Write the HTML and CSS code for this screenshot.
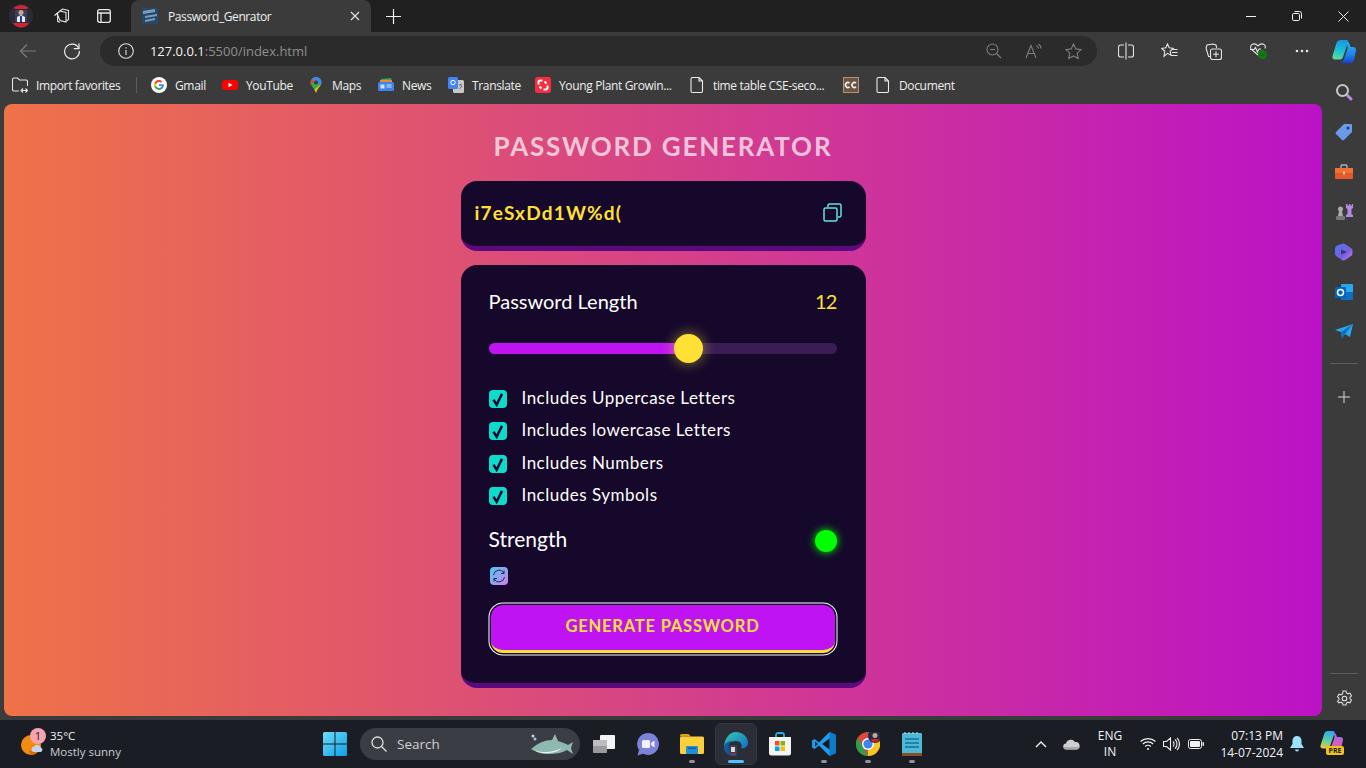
FILE: index.html
```html
<!DOCTYPE html>
<html lang="en">
<head>
  <meta charset="UTF-8" />
  <meta name="viewport" content="width=device-width, initial-scale=1.0"/>
  <title>Password_Genrator</title>
  <link rel="stylesheet" href="styles.css">
</head>
<body>

  <!-- tab strip -->
  <div class="tabstrip">
    <div class="strip-btn avatar-btn">
      <svg width="24" height="24" viewBox="0 0 24 24"><circle cx="12" cy="12" r="12" fill="#2a2d38"/><path d="M5 3.5a11 11 0 0 1 14 0l-1 1.5H6zM4 19h16l-2 2.5a11 11 0 0 1-12 0z" fill="#d8222f"/><rect x="6" y="6" width="12" height="12" fill="#39405e"/><circle cx="12" cy="8.5" r="2.5" fill="#c9a58e"/><path d="M8 18v-5l4-2 4 2v5z" fill="#e9ecf4"/><path d="M11 12h2v6h-2z" fill="#1f3fa0"/></svg>
    </div>
    <div class="strip-btn first-btn">
      <svg width="18" height="18" viewBox="0 0 18 18" fill="none" stroke="#e8e8e8" stroke-width="1.1"><path d="M6.5 4.5 9.5 2l6 1.5v9l-2 1.5"/><path d="M4 6.5 7 4l6 1.5V15l-6-1.5z" fill="#202020"/><path d="M1.5 8.5 4.500 6.200l.2 8.300 2.300.7"/></svg>
    </div>
    <div class="strip-btn">
      <svg width="16" height="16" viewBox="0 0 16 16" fill="none" stroke="#e8e8e8" stroke-width="1.3"><rect x="1.7" y="1.7" width="12.6" height="12.6" rx="2"/><path d="M1.7 5h12.6M5 5v9"/></svg>
    </div>
    <div class="tab">
      <svg class="tab-icon" width="16" height="16" viewBox="0 0 16 16"><rect width="16" height="16" fill="#24496f"/><path d="M1 3l12-2v3L1 6zM3 8l12-2v2L3 10zM3 12l10-2v2L3 14z" fill="#7d9cb8"/></svg>
      <span class="tab-title">Password_Genrator</span>
      <svg width="10" height="10" viewBox="0 0 10 10" stroke="#e8e8e8" stroke-width="1.1"><path d="M1 1l8 8M9 1l-8 8"/></svg>
    </div>
    <div class="strip-btn new-tab">
      <svg width="15" height="15" viewBox="0 0 15 15" stroke="#f2f2f2" stroke-width="1.2"><path d="M7.5 0v15M0 7.5h15"/></svg>
    </div>
    <div class="window-btns">
      <div class="win-btn"><svg width="10" height="10" viewBox="0 0 10 10" stroke="#f2f2f2"><path d="M0 5.5h10"/></svg></div>
      <div class="win-btn"><svg width="10" height="10" viewBox="0 0 10 10" fill="none" stroke="#f2f2f2"><rect x=".5" y="2.5" width="7" height="7" rx="1.2"/><path d="M2.5 .5h5a2 2 0 0 1 2 2v5"/></svg></div>
      <div class="win-btn"><svg width="11" height="11" viewBox="0 0 11 11" stroke="#f2f2f2"><path d="M.5.5l10 10M10.5.5l-10 10"/></svg></div>
    </div>
  </div>

  <!-- address bar -->
  <div class="toolbar">
    <div class="tool-btn dim">
      <svg width="18" height="16" viewBox="0 0 18 16" fill="none" stroke="#7b7b7b" stroke-width="1.2"><path d="M17 8H1.5M8 1.5 1.5 8 8 14.5"/></svg>
    </div>
    <div class="tool-btn">
      <svg width="18" height="18" viewBox="0 0 18 18" fill="none" stroke="#ececec" stroke-width="1.2"><path d="M15.8 6.500A7.400 7.400 0 1 0 16.400 9"/><path d="M16 1.5v5.200h-5.200"/></svg>
    </div>
    <div class="address">
      <svg class="info-icon" width="16" height="16" viewBox="0 0 16 16" fill="none" stroke="#e0e0e0" stroke-width="1.1"><circle cx="8" cy="8" r="7.3"/><path d="M8 7v5M8 4.200v1.300"/></svg>
      <span class="url"><b>127.0.0.1</b>:5500/index.html</span>
      <div class="address-icons">
        <span class="addr-icon"><svg width="16" height="16" viewBox="0 0 16 16" fill="none" stroke="#7f7f7f" stroke-width="1.1"><circle cx="6.5" cy="6.5" r="5.5"/><path d="M4 6.5h5M10.5 10.500 15 15"/></svg></span>
        <span class="addr-icon"><svg width="18" height="16" viewBox="0 0 18 16" fill="none" stroke="#7f7f7f" stroke-width="1.1"><path d="M1 15 6 2.500 11 15M2.800 10.500h6.400M11.500 2.500a4 4 0 0 1 2 3M13.500 1a6 6 0 0 1 2.500 4.500"/></svg></span>
        <span class="addr-icon"><svg width="17" height="17" viewBox="0 0 17 17" fill="none" stroke="#7f7f7f" stroke-width="1.1"><path d="m8.500 1 2.300 4.900 5.300.7-3.900 3.600 1 5.300-4.700-2.600-4.700 2.600 1-5.300L.9 6.600l5.300-.7z"/></svg></span>
      </div>
    </div>
    <div class="tool-right">
      <div class="tool-icon"><svg width="16" height="18" viewBox="0 0 16 18" fill="none" stroke="#e6e6e6" stroke-width="1.1"><path d="M8 .5v17M6 3H2.500a2 2 0 0 0-2 2v8a2 2 0 0 0 2 2H6M10 3h3.500a2 2 0 0 1 2 2v8a2 2 0 0 1-2 2H10"/></svg></div>
      <div class="tool-icon"><svg width="17" height="16" viewBox="0 0 17 16" fill="none" stroke="#e6e6e6" stroke-width="1.1"><path d="M6.500 1 8.200 4.800l4 .5-3 2.800.8 4.200-3.500-2-3.500 3 .8-5-3-2.900 4-.6zM11.500 6.500H16.500M11 9.500h5.500M10.500 12.500h6"/></svg></div>
      <div class="tool-icon"><svg width="17" height="17" viewBox="0 0 17 17" fill="none" stroke="#e6e6e6" stroke-width="1.1"><path d="M5 13.500H3.500L1 5l1-3 6-1 3 1 .7 3"/><rect x="5.5" y="6" width="11" height="10.5" rx="2"/><path d="M11 8.300v6M8 11.300h6"/></svg></div>
      <div class="tool-icon"><svg width="18" height="18" viewBox="0 0 18 18"><path d="M9 13 2 7a3.500 3.500 0 0 1 0-3.500C3.500 1.500 6.500 1 9 4c2.500-3 5.500-2.500 7-.5.500 1 .5 2 0 3" fill="none" stroke="#e6e6e6" stroke-width="1.1"/><path d="M1 7.500h4l1.500-2 2 4.500 1.500-3h2" fill="none" stroke="#e6e6e6" stroke-width="1.1"/><circle cx="13.5" cy="12.5" r="4.5" fill="#107c10"/><path d="m11.500 12.500 1.500 1.500 2.500-2.500" fill="none" stroke="#0b3d0b" stroke-width="1"/></svg></div>
      <div class="tool-icon"><svg width="14" height="4" viewBox="0 0 14 4" fill="#e6e6e6"><circle cx="2" cy="2" r="1.3"/><circle cx="7" cy="2" r="1.3"/><circle cx="12" cy="2" r="1.3"/></svg></div>
      <div class="tool-icon copilot"><svg width="24" height="23" viewBox="0 0 24 23"><defs><linearGradient id="cpA" x1="0.5" y1="0" x2="0.3" y2="1"><stop offset="0" stop-color="#1398e8"/><stop offset=".55" stop-color="#1cc4d0"/><stop offset="1" stop-color="#5fdc98"/></linearGradient><linearGradient id="cpB" x1="0.5" y1="0" x2="0.5" y2="1"><stop offset="0" stop-color="#2bb4f4"/><stop offset=".6" stop-color="#1c86ea"/><stop offset="1" stop-color="#1a3fd0"/></linearGradient></defs><path d="M9 0h5.500c1.500 0 2 1 1.500 2.500L11 17c-.5 1.500-1.500 2.500-3 2.500H3c-2 0-3-1.500-2.500-3.500l4-13C5 1 7 0 9 0z" fill="url(#cpA)"/><path d="M15 2c1-.2 2 .3 2.300 1.500L18.500 7h2.500c2 0 3 1 3 3l-1.800 9.500c-.4 2-1.700 3.500-3.700 3.500H7c2.500 0 4-1.200 4.800-3.500l3.500-10c.5-1.500.5-2.500 0-4z" fill="url(#cpB)"/></svg></div>
    </div>
  </div>

  <div class="below">
    <div class="content">
      <!-- favourites bar -->
      <div class="favbar">
        <div class="fav fav-import">
          <svg width="16" height="16" viewBox="0 0 16 16" fill="none" stroke="#e6e6e6" stroke-width="1.1"><path d="M7 14H2a1.500 1.500 0 0 1-1.500-1.500v-10A1.500 1.500 0 0 1 2 1h3.500l2 2H14a1.500 1.500 0 0 1 1.500 1.500V9M9 13.500h6.500M11 11.500l-2 2 2 2M13.500 11.500l2 2-2 2"/></svg>
          <span>Import favorites</span>
        </div>
        <div class="fav-sep"></div>
        <div class="fav fav-gmail">
          <svg width="16" height="16" viewBox="0 0 16 16"><circle cx="8" cy="8" r="8" fill="#fff"/><path d="M12.800 8.200c0-.4 0-.7-.1-1H8v1.800h2.700a2.300 2.300 0 0 1-1 1.500v1.300h1.600c1-.9 1.500-2.200 1.500-3.600z" fill="#4285f4"/><path d="M8 13c1.300 0 2.400-.4 3.300-1.200l-1.600-1.300c-.4.300-1 .5-1.700.5-1.300 0-2.400-.9-2.800-2H3.500v1.300A5 5 0 0 0 8 13z" fill="#34a853"/><path d="M5.200 9A3 3 0 0 1 5.200 7V5.700H3.500a5 5 0 0 0 0 4.600z" fill="#fbbc05"/><path d="M8 5c.7 0 1.400.3 1.900.7l1.400-1.400A5 5 0 0 0 3.500 5.700L5.200 7c.4-1.200 1.500-2 2.800-2z" fill="#ea4335"/></svg>
          <span>Gmail</span>
        </div>
        <div class="fav fav-yt">
          <svg width="16" height="16" viewBox="0 0 16 16"><rect y="3" width="16" height="10" rx="3" fill="#f00"/><path d="m6.500 5.700 4 2.300-4 2.300z" fill="#fff"/></svg>
          <span>YouTube</span>
        </div>
        <div class="fav fav-maps">
          <svg width="16" height="16" viewBox="0 0 16 16"><path d="M8 0a5.500 5.500 0 0 1 5.500 5.500c0 3.500-4 5.500-5.500 10.500C6.500 11 2.500 9 2.500 5.500A5.500 5.500 0 0 1 8 0z" fill="#34a853"/><path d="M8 0a5.500 5.500 0 0 1 5.500 5.500c0 1-.3 1.800-.8 2.600L4 2a5.500 5.500 0 0 1 4-2z" fill="#4285f4"/><path d="M2.500 5.500A5.500 5.500 0 0 1 4 2l2 2-3 4a5 5 0 0 1-.5-2.500z" fill="#ea4335"/><path d="M13 7c-1 2.500-3.800 4.500-5 9-.4-1.300-1-2.300-1.700-3.300z" fill="#fbbc05"/><circle cx="8" cy="5.5" r="2" fill="#3a3a3a"/></svg>
          <span>Maps</span>
        </div>
        <div class="fav fav-news">
          <svg width="16" height="16" viewBox="0 0 16 16"><path d="M3 2l10-1 1 4H2z" fill="#34a853"/><path d="M2 3h12v3H2z" fill="#ea8c35"/><rect y="5" width="16" height="9" rx="1.5" fill="#3f85e8"/><rect x="2.5" y="7.5" width="4" height="4" fill="#cfe2ff"/><path d="M8.500 8h5M8.500 10h5" stroke="#cfe2ff"/></svg>
          <span>News</span>
        </div>
        <div class="fav fav-translate">
          <svg width="16" height="16" viewBox="0 0 16 16"><rect x="5" y="3" width="11" height="13" rx="1.5" fill="#c8c8c8"/><rect width="10" height="12" rx="1.5" fill="#4285f4"/><circle cx="5" cy="5.5" r="2.2" fill="none" stroke="#fff"/><path d="M11 8h3M12.500 7v1M11.500 12l2.500-3" stroke="#666" fill="none"/></svg>
          <span>Translate</span>
        </div>
        <div class="fav fav-plant">
          <svg width="16" height="16" viewBox="0 0 16 16"><rect width="16" height="16" rx="2.5" fill="#f52d3e"/><path d="M7.500 3.500H5a1.500 1.500 0 0 0-1.500 1.500v2.500M8.500 12.500H11a1.500 1.500 0 0 0 1.500-1.500V8.500" fill="none" stroke="#fff" stroke-width="2"/><path d="M9.500 4.500l2 2M4.500 9.500l2 2" stroke="#fff" stroke-width="2"/></svg>
          <span>Young Plant Growin...</span>
        </div>
        <div class="fav fav-time">
          <svg width="16" height="16" viewBox="0 0 16 16" fill="none" stroke="#ececec" stroke-width="1.1"><path d="M3.500.5H10l3.500 3.500v10a1.500 1.500 0 0 1-1.500 1.500H3.500A1.500 1.500 0 0 1 2 14V2A1.500 1.500 0 0 1 3.500.5zM10 .5V4h3.500"/></svg>
          <span>time table CSE-seco...</span>
        </div>
        <div class="fav fav-cc">
          <svg width="16" height="16" viewBox="0 0 16 16"><rect width="16" height="16" fill="#6d5541"/><rect x=".5" y=".5" width="15" height="15" fill="none" stroke="#a9967f"/><path d="M7 6a2.500 2.500 0 1 0 0 4M13.500 6a2.500 2.500 0 1 0 0 4" transform="translate(-.5 0)" fill="none" stroke="#f2f2f2" stroke-width="1.6"/></svg>
        </div>
        <div class="fav fav-doc">
          <svg width="16" height="16" viewBox="0 0 16 16" fill="none" stroke="#ececec" stroke-width="1.1"><path d="M3.500.5H10l3.500 3.500v10a1.500 1.500 0 0 1-1.500 1.500H3.500A1.500 1.500 0 0 1 2 14V2A1.500 1.500 0 0 1 3.500.5zM10 .5V4h3.500"/></svg>
          <span>Document</span>
        </div>
      </div>

      <!-- the page itself -->
      <main class="page">
        <h1 class="title">PASSWORD GENERATOR</h1>

        <div class="display">
          <span class="password">i7eSxDd1W%d(</span>
          <svg class="copy-icon" width="19" height="19" viewBox="0 0 19 19" fill="none" stroke="#5ce6e0" stroke-width="1.5"><rect x="1" y="5" width="13" height="13" rx="1.5"/><path d="M5 4V2.500A1.500 1.500 0 0 1 6.500 1h10A1.500 1.500 0 0 1 18 2.500v10a1.500 1.500 0 0 1-1.500 1.500H15"/></svg>
        </div>

        <div class="panel">
          <div class="length-row">
            <span>Password Length</span>
            <span class="length-num">12</span>
          </div>

          <div class="slider">
            <div class="slider-fill"></div>
            <div class="slider-thumb"></div>
          </div>

          <div class="options">
            <label class="option"><span class="check"><svg width="16" height="16" viewBox="0 0 14 14" fill="none" stroke="#15082b" stroke-width="2.2"><path d="M3 7.500l2.800 4.500L10.500 2.500"/></svg></span>Includes Uppercase Letters</label>
            <label class="option"><span class="check"><svg width="16" height="16" viewBox="0 0 14 14" fill="none" stroke="#15082b" stroke-width="2.2"><path d="M3 7.500l2.800 4.500L10.500 2.500"/></svg></span>Includes lowercase Letters</label>
            <label class="option"><span class="check"><svg width="16" height="16" viewBox="0 0 14 14" fill="none" stroke="#15082b" stroke-width="2.2"><path d="M3 7.500l2.800 4.500L10.500 2.500"/></svg></span>Includes Numbers</label>
            <label class="option"><span class="check"><svg width="16" height="16" viewBox="0 0 14 14" fill="none" stroke="#15082b" stroke-width="2.2"><path d="M3 7.500l2.800 4.500L10.500 2.500"/></svg></span>Includes Symbols</label>
          </div>

          <div class="strength-row">
            <span>Strength</span>
            <span class="strength-dot"></span>
          </div>

          <div class="ext-icon">
            <svg width="14" height="14" viewBox="0 0 14 14" fill="none" stroke="#15203a" stroke-width=".9"><path d="M1.500 6A5.500 5.500 0 0 1 12 4.500M12.500 8A5.500 5.500 0 0 1 2 9.500M12 1.500v3H9M2 12.500v-3h3"/></svg>
          </div>

          <button class="generate">GENERATE PASSWORD</button>
        </div>
      </main>
    </div>

    <!-- edge sidebar -->
    <aside class="sidebar">
      <div class="side-icon"><svg width="18" height="18" viewBox="0 0 18 18"><circle cx="7.5" cy="7.5" r="5.5" fill="none" stroke="#c8c8c8" stroke-width="2"/><path d="m11.500 11.500 1.500 1.500" stroke="#c8c8c8" stroke-width="2"/><path d="m13 13 3 3" stroke="#b98ae8" stroke-width="3" stroke-linecap="round"/></svg></div>
      <div class="side-icon"><svg width="18" height="18" viewBox="0 0 18 18"><path d="M9 1h7a1 1 0 0 1 1 1v7l-8 8a1.500 1.500 0 0 1-2 0L1 11a1.500 1.500 0 0 1 0-2z" fill="#6a9ae8"/><circle cx="13" cy="5" r="1.5" fill="#1d3a70"/></svg></div>
      <div class="side-icon"><svg width="18" height="16" viewBox="0 0 18 16"><path d="M6 4V2a1 1 0 0 1 1-1h4a1 1 0 0 1 1 1v2" fill="none" stroke="#b0b0b0" stroke-width="1.4"/><rect y="4" width="18" height="11" rx="1" fill="#e2592a"/><rect y="4" width="18" height="5" fill="#f07038"/><rect x="8" y="7.5" width="2" height="3" fill="#f2c9a8"/></svg></div>
      <div class="side-icon"><svg width="18" height="18" viewBox="0 0 18 18"><path d="M11 1h1.500v1.500H14V1h1.500v1.500H17V1h1v4l-1.500 1v5l1.500 1v2h-7v-2l1.500-1V6L11 5z" fill="#b38ae0"/><circle cx="5.5" cy="6" r="2.5" fill="#aaa"/><path d="M4 8h3l1 5H3z" fill="#aaa"/><rect x="1" y="13" width="9" height="4" rx="1" fill="#777"/></svg></div>
      <div class="side-icon"><svg width="18" height="18" viewBox="0 0 18 18"><defs><linearGradient id="m365" x1="0" y1="0" x2="1" y2="1"><stop offset="0" stop-color="#4a7ce8"/><stop offset=".6" stop-color="#7b5ce0"/><stop offset="1" stop-color="#c98ae8"/></linearGradient></defs><path d="M8 .5a3 3 0 0 1 2 .5l6 4a3 3 0 0 1 1.500 2.500v3a3 3 0 0 1-1.500 2.500l-6 4a3 3 0 0 1-3.500-.2L1 13a3 3 0 0 1-1-2.500v-5A4 4 0 0 1 2 2.500z" fill="url(#m365)"/><path d="M6 6.500 12 9l-6 2.500z" fill="#2a3a7a"/></svg></div>
      <div class="side-icon"><svg width="18" height="18" viewBox="0 0 18 18"><rect x="6" y="1" width="12" height="16" rx="1" fill="#28a8ea"/><path d="M6 9h12v8H6z" fill="#0a6fc2"/><rect y="4" width="11" height="11" rx="1" fill="#0364b8"/><circle cx="5.5" cy="9.5" r="3" fill="none" stroke="#fff" stroke-width="1.5"/></svg></div>
      <div class="side-icon"><svg width="18" height="16" viewBox="0 0 18 16"><path d="M0 6 18 0l-3 13-5-3-3 4-1-6z" fill="#29a9ea"/><path d="M6 8 18 0 10 10l-3 4z" fill="#0c6fbd"/></svg></div>
      <div class="side-sep"></div>
      <div class="side-icon"><svg width="12" height="12" viewBox="0 0 12 12" stroke="#d8d8d8"><path d="M6 0v12M0 6h12"/></svg></div>
      <div class="side-bottom">
        <div class="side-sep"></div>
        <div class="side-icon"><svg width="17" height="17" viewBox="0 0 17 17" fill="none" stroke="#dedede" stroke-width="1.1"><path d="M7 1h3l.5 2 1.500.8 2-.6 1.500 2.600-1.500 1.400v1.600l1.500 1.400-1.500 2.600-2-.6-1.500.8-.5 2H7l-.5-2-1.500-.8-2 .6L1.500 11.200 3 9.800V8.200L1.500 6.800 3 4.200l2 .6 1.500-.8z"/><circle cx="8.5" cy="8.5" r="2.3"/></svg></div>
      </div>
    </aside>
  </div>

  <!-- windows taskbar -->
  <footer class="taskbar">
    <div class="weather">
      <div class="weather-icon">
        <svg width="24" height="22" viewBox="0 0 24 22"><circle cx="10" cy="11" r="10" fill="#f08c12"/><path d="M10 21c4 0 5-2 6-4H8z" fill="#e06a0a"/><path d="M12 18a3 3 0 0 1 1-5.500 4 4 0 0 1 7 1 2.500 2.500 0 0 1 0 4.500z" fill="#c5d3ee"/></svg>
        <span class="weather-badge">1</span>
      </div>
      <div class="weather-text">
        <span class="temp">35°C</span>
        <span>Mostly sunny</span>
      </div>
    </div>

    <div class="task-center">
      <div class="task-app win-logo">
        <svg width="24" height="24" viewBox="0 0 24 24"><defs><linearGradient id="winG" x1="0" y1="0" x2="1" y2="1"><stop offset="0" stop-color="#6fdcf8"/><stop offset="1" stop-color="#0e9fe8"/></linearGradient></defs><path d="M0 1.500A1.500 1.500 0 0 1 1.500 0h10v11.500H0zM12.500 0H22.500A1.500 1.500 0 0 1 24 1.500v10H12.500zM0 12.500h11.500V24h-10A1.500 1.500 0 0 1 0 22.500zM12.500 12.500H24v10a1.500 1.500 0 0 1-1.500 1.500h-10z" fill="url(#winG)"/></svg>
      </div>
      <div class="searchbox">
        <svg width="16" height="16" viewBox="0 0 16 16" fill="none" stroke="#e0e0e0" stroke-width="1.3"><circle cx="6.5" cy="6.5" r="5.5"/><path d="m10.500 10.500 5 5"/></svg>
        <span>Search</span>
        <svg class="shark" width="44" height="24" viewBox="0 0 44 24"><path d="M1 17c7-6 14-9 21-9l3-6 3 7c4 1 8 3 10 4l5-3-2 6 2 6-6-4c-5 3-12 4-19 4-7 0-12-2-17-5z" fill="#8fb8b0"/><path d="M4 18c8 3 18 3 28-2-6 6-20 7-28 2z" fill="#e6f2ee"/><circle cx="3" cy="4" r="1.5" fill="#bcd6ee"/><circle cx="5" cy="7" r="1.5" fill="#9fc4e8"/></svg>
      </div>
      <div class="task-app first-app">
        <svg width="24" height="24" viewBox="0 0 24 24"><rect x="8" y="3" width="15" height="14" rx="1" fill="#f4f4f4"/><rect x="1" y="8" width="14" height="13" rx="1" fill="#9a9a9a"/><rect x="1" y="8" width="14" height="6" fill="#bdbdbd"/></svg>
      </div>
      <div class="task-app">
        <svg width="24" height="24" viewBox="0 0 24 24"><path d="M12 1a11 11 0 1 1-5 20.800L1.500 23.500 3 18A11 11 0 0 1 12 1z" fill="#7b83d8"/><rect x="6" y="8" width="8" height="8" rx="1.5" fill="#f2f2ff"/><path d="m15 11 3.500-2.500v7L15 13z" fill="#f2f2ff"/></svg>
      </div>
      <div class="task-app has-dot">
        <svg width="24" height="24" viewBox="0 0 24 24"><path d="M0 3.500A1.500 1.500 0 0 1 1.500 2h7l2.500 2.500h-11z" fill="#d9a408"/><rect y="4.5" width="24" height="17.5" rx="1.5" fill="#fbd03c"/><rect x="6" y="14" width="12" height="8" rx="1" fill="#1f8fd8"/><rect x="8" y="15.5" width="8" height="1.5" fill="#0f5fa8"/></svg>
      </div>
      <div class="task-app active">
        <svg width="24" height="24" viewBox="0 0 24 24"><defs><linearGradient id="edgeG" x1="0" y1="0" x2="1" y2="1"><stop offset="0" stop-color="#36c8b0"/><stop offset="1" stop-color="#0f6fc8"/></linearGradient></defs><path d="M12 0c7 0 12 5 12 11 0 4-4 6-7 5 2-3 0-7-5-7-5 0-10 3-12 7C0 7 5 0 12 0z" fill="url(#edgeG)"/><path d="M0 16c0-4 4-7 8-7-3 2-4 5-3 8 1 4 5 7 10 6-7 3-15-1-15-7z" fill="#0c59a4"/><rect x="5" y="13" width="8" height="10" rx="2" fill="#3a3f4e"/><rect x="7" y="15" width="4" height="5" fill="#d8d8e0"/><path d="M6 22h6" stroke="#d8222f"/></svg>
      </div>
      <div class="task-app">
        <svg width="24" height="24" viewBox="0 0 24 24"><path d="M8 6V3a2 2 0 0 1 2-2h4a2 2 0 0 1 2 2v3" fill="none" stroke="#2aa8e8" stroke-width="1.8"/><path d="M1 5h22v16a2.500 2.500 0 0 1-2.500 2.500h-17A2.500 2.500 0 0 1 1 21z" fill="#f4f4f4"/><rect x="7" y="9" width="4.5" height="4.5" fill="#f25022"/><rect x="12.5" y="9" width="4.5" height="4.5" fill="#7fba00"/><rect x="7" y="14.5" width="4.5" height="4.5" fill="#00a4ef"/><rect x="12.5" y="14.5" width="4.5" height="4.5" fill="#ffb900"/></svg>
      </div>
      <div class="task-app has-dot">
        <svg width="24" height="24" viewBox="0 0 24 24"><path d="M17.500 0 24 3v18l-6.500 3L7 13.500 2.500 17 0 15.500v-7L2.500 7 7 10.500z" fill="#1f9cf0"/><path d="M17.500 0 24 3v18l-6.500 3z" fill="#0f7ac8"/><path d="M17.500 6.500v11L10 12z" fill="#171a22"/><path d="M3 9.500 6 12l-3 2.500z" fill="#171a22"/></svg>
      </div>
      <div class="task-app has-dot">
        <svg width="24" height="24" viewBox="0 0 24 24"><circle cx="12" cy="12" r="12" fill="#dd4a3a"/><path d="M12 24a12 12 0 0 0 10.500-18H12z" fill="#f8c81c"/><path d="M12 24C5.400 24 0 18.600 0 12c0-2.300.6-4.300 1.700-6L8 16z" fill="#2f9e48"/><circle cx="12" cy="12" r="6" fill="#fff"/><circle cx="12" cy="12" r="4.6" fill="#3f85f0"/><circle cx="19" cy="4" r="7" fill="#1f2a44"/><circle cx="19" cy="3.5" r="2.5" fill="#c9a58e"/><path d="M14.500 7h9l-2 3h-5z" fill="#c22"/></svg>
      </div>
      <div class="task-app has-dot">
        <svg width="20" height="24" viewBox="0 0 20 24"><rect y="1" width="20" height="23" rx="1" fill="#4db8d8"/><rect y="21" width="20" height="3" fill="#8a5020"/><path d="M3 7h14M3 11h14M3 15h14" stroke="#1a6f90" stroke-width="1.6"/><path d="M3 0v2M7 0v2M11 0v2M15 0v2" stroke="#d8f0f8"/></svg>
      </div>
    </div>

    <div class="tray">
      <svg class="tray-chevron" width="12" height="7" viewBox="0 0 12 7" fill="none" stroke="#f0f0f0" stroke-width="1.4"><path d="m1 6 5-5 5 5"/></svg>
      <svg class="tray-cloud" width="17" height="12" viewBox="0 0 17 12"><path d="M3.500 11.500a3 3 0 0 1-.5-6A5 5 0 0 1 12 4a3.700 3.700 0 0 1 1.500 7.500z" fill="#d0d0d0"/><path d="M3.500 11.500a3 3 0 0 1-3-2.500h16a3.700 3.700 0 0 1-3 2.500z" fill="#a8a8a8"/></svg>
      <div class="lang"><span>ENG</span><span>IN</span></div>
      <svg class="tray-wifi" width="16" height="14" viewBox="0 0 16 14" fill="none" stroke="#f0f0f0" stroke-width="1.2"><path d="M.5 4.500a11 11 0 0 1 15 0M2.800 7a7.600 7.600 0 0 1 10.400 0M5.200 9.500a4 4 0 0 1 5.600 0"/><circle cx="8" cy="12" r="1" fill="#f0f0f0" stroke="none"/></svg>
      <svg class="tray-vol" width="17" height="14" viewBox="0 0 17 14" fill="none" stroke="#f0f0f0" stroke-width="1.1"><path d="M.5 4.500h3L7.500 1v12l-4-3.500h-3zM10 4.500a3.500 3.500 0 0 1 0 5M12 2.500a6 6 0 0 1 0 9M14 .8a9 9 0 0 1 0 12.400"/></svg>
      <svg class="tray-batt" width="16" height="10" viewBox="0 0 16 10"><rect x=".5" y=".5" width="13" height="9" rx="2" fill="none" stroke="#f0f0f0"/><rect x="2" y="2" width="10" height="6" rx="1" fill="#f0f0f0"/><rect x="14.5" y="3" width="1.5" height="4" rx=".7" fill="#f0f0f0"/></svg>
      <div class="clock"><span>07:13 PM</span><span>14-07-2024</span></div>
      <svg class="tray-bell" width="14" height="16" viewBox="0 0 14 16"><path d="M7 0a4.500 4.500 0 0 1 4.500 4.500V8l2.500 4H0l2.500-4V4.500A4.500 4.500 0 0 1 7 0z" fill="#9ae3fb"/><path d="M5 13.500h4a2 2 0 0 1-4 0z" fill="#9ae3fb"/></svg>
      <div class="tray-copilot">
        <svg width="24" height="20" viewBox="0 0 24 20"><defs><linearGradient id="cpT" x1="0.5" y1="0" x2="0.3" y2="1"><stop offset="0" stop-color="#2fa8f0"/><stop offset=".55" stop-color="#5fd09a"/><stop offset="1" stop-color="#f0c848"/></linearGradient><linearGradient id="cpU" x1="0.5" y1="0" x2="0.5" y2="1"><stop offset="0" stop-color="#9a6af0"/><stop offset="1" stop-color="#f05aa0"/></linearGradient></defs><path d="M8 0h5c1.500 0 2 1 1.500 2.500L10 15c-.5 1.500-1.500 2.500-3 2.500H3c-2 0-3-1.500-2.500-3l3.500-11C4.500 1 6 0 8 0z" fill="url(#cpT)"/><path d="M14 2c1 0 1.700.5 2 1.500L17 6h3c2 0 3.500 1 3 3l-1.500 7c-.4 2-1.500 3-3.500 3H7c2 0 3.500-1 4-3l3-8c.5-1.500.5-3 0-5z" fill="url(#cpU)"/></svg>
        <span class="pre">PRE</span>
      </div>
    </div>
  </footer>

</body>
</html>
```

FILE: styles.css
```css
* {
  box-sizing: border-box;
}

html, body {
  height: 100%;
}

body {
  margin: 0;
  width: 1366px;
  height: 768px;
  overflow: hidden;
  display: flex;
  flex-direction: column;
  background: #3b3b3b;
  color: #f0f0f0;
  font-family: "Open Sans", "Noto Sans", sans-serif;
  font-size: 12px;
}

svg {
  display: block;
  flex-shrink: 0;
}

/* tab strip */
.tabstrip {
  height: 32px;
  background: #202020;
  display: flex;
  align-items: center;
}

.strip-btn {
  width: 42px;
  height: 32px;
  display: flex;
  align-items: center;
  justify-content: center;
}

.first-btn {
  margin-left: -1px;
}

.tab {
  width: 240px;
  height: 32px;
  margin-left: 6px;
  background: #3b3b3b;
  border-radius: 8px 8px 0 0;
  display: flex;
  align-items: center;
  padding: 0 11px;
}

.tab-icon {
  margin-right: 10px;
}

.tab-title {
  flex: 1;
  font-size: 12px;
  letter-spacing: -0.4px;
  color: #f2f2f2;
}

.new-tab {
  width: 44px;
}

.window-btns {
  margin-left: auto;
  display: flex;
}

.win-btn {
  width: 46px;
  height: 32px;
  display: flex;
  align-items: center;
  justify-content: center;
}

/* address bar */
.toolbar {
  height: 34px;
  padding-top: 4px;
  background: #3b3b3b;
  display: flex;
  align-items: flex-start;
  padding-left: 6px;
}

.tool-btn {
  width: 44px;
  height: 30px;
  display: flex;
  align-items: center;
  justify-content: center;
}

.address {
  width: 998px;
  height: 30px;
  margin-left: 6px;
  background: #2b2b2b;
  border-radius: 15px;
  display: flex;
  align-items: center;
  padding-left: 18px;
}

.info-icon {
  margin-right: 16px;
}

.url {
  font-size: 13px;
  color: #8f8f8f;
}

.url b {
  font-weight: 400;
  color: #f4f4f4;
}

.address-icons {
  margin-left: auto;
  display: flex;
  padding-right: 3px;
}

.addr-icon {
  width: 40px;
  display: flex;
  justify-content: center;
}

.tool-right {
  display: flex;
  margin-left: 7px;
}

.tool-icon {
  width: 44px;
  height: 30px;
  display: flex;
  align-items: center;
  justify-content: center;
}

.copilot {
  margin-left: -2px;
}

/* favourites and page */
.below {
  height: 654px;
  display: flex;
}

.content {
  width: 1322px;
  display: flex;
  flex-direction: column;
}

.favbar {
  height: 38px;
  flex-shrink: 0;
  display: flex;
  align-items: center;
  padding-left: 12px;
}

.fav {
  display: flex;
  align-items: center;
  gap: 8px;
  color: #efefef;
  font-size: 12px;
  letter-spacing: -0.35px;
  white-space: nowrap;
}

.fav-import {
  width: 124px;
}

.fav-sep {
  width: 1px;
  height: 16px;
  background: #5c5c5c;
  margin-right: 14px;
}

.fav-gmail {
  width: 71px;
}

.fav-yt {
  width: 86px;
}

.fav-maps {
  width: 70px;
}

.fav-news {
  width: 70px;
}

.fav-translate {
  width: 87px;
}

.fav-plant {
  width: 154px;
}

.fav-time {
  width: 154px;
}

.fav-cc {
  width: 32px;
}

.page {
  height: 612px;
  margin: 0 0 4px 4px;
  border-radius: 8px;
  background: linear-gradient(to right, #ef7248, #bc12c6);
  display: flex;
  flex-direction: column;
  align-items: center;
  padding-top: 25px;
  font-family: Lato, "Open Sans", sans-serif;
}

.title {
  margin: 0 0 18px;
  height: 34px;
  line-height: 34px;
  font-size: 26px;
  font-weight: 700;
  letter-spacing: 1.8px;
  color: rgba(255, 255, 255, 0.7);
}

.display {
  width: 405px;
  height: 70px;
  border-radius: 16px;
  background: #15082b;
  border-bottom: 5px solid #5a0a7c;
  display: flex;
  align-items: center;
  justify-content: space-between;
  padding: 0 24px 3px 14px;
  margin-bottom: 14px;
}

.password {
  font-size: 19px;
  font-weight: 700;
  letter-spacing: 1.2px;
  color: #ffe135;
}

.panel {
  width: 405px;
  height: 423px;
  border-radius: 16px;
  background: #15082b;
  border-bottom: 5px solid #5a0a7c;
  padding: 23px 29px 0 28px;
}

.length-row,
.strength-row {
  display: flex;
  justify-content: space-between;
  align-items: center;
  color: #fff;
  font-size: 20px;
  height: 26px;
}

.length-num {
  font-size: 20px;
  letter-spacing: -0.8px;
  color: #ffe135;
}

.slider {
  position: relative;
  height: 11px;
  margin-top: 29px;
  border-radius: 6px;
  background: #3a1d55;
}

.slider-fill {
  width: 57%;
  height: 100%;
  border-radius: 6px;
  background: #bf13f3;
}

.slider-thumb {
  position: absolute;
  left: 185px;
  top: -9px;
  width: 29px;
  height: 29px;
  border-radius: 50%;
  background: #ffe135;
  box-shadow: 0 0 14px rgba(255, 225, 53, 0.55);
}

.options {
  margin-top: 31px;
  display: flex;
  flex-direction: column;
  gap: 8.5px;
}

.option {
  display: flex;
  align-items: center;
  height: 24px;
  font-size: 17px;
  letter-spacing: 0.5px;
  color: #fff;
}

.check {
  width: 18px;
  height: 18px;
  margin-top: 3px;
  margin-right: 15px;
  border-radius: 4px;
  background: #0ddccb;
  display: flex;
  align-items: center;
  justify-content: center;
}

.strength-row {
  margin-top: 19px;
  font-size: 21px;
}

.strength-dot {
  width: 22px;
  height: 22px;
  margin-top: 4px;
  border-radius: 50%;
  background: #00ff00;
  box-shadow: 0 0 8px #00ff00;
}

.ext-icon {
  width: 18px;
  height: 18px;
  margin-top: 15px;
  margin-left: 1px;
  border-radius: 4px;
  background: linear-gradient(135deg, #4ac8f4, #d080ea);
  display: flex;
  align-items: center;
  justify-content: center;
}

.generate {
  display: block;
  width: 344px;
  height: 48px;
  margin: 20px 0 0 2px;
  padding: 0 0 2px;
  border: none;
  border-radius: 12px;
  background: #bf13f3;
  border-bottom: 3px solid #ffe135;
  box-shadow: 0 0 0 1.5px #15082b, 0 0 0 2.5px #fff;
  color: #ffe135;
  font-family: inherit;
  font-size: 16.5px;
  font-weight: 700;
  letter-spacing: 0.8px;
}

/* edge sidebar */
.sidebar {
  width: 44px;
  display: flex;
  flex-direction: column;
  align-items: center;
  background: #3b3b3b;
  padding-top: 6px;
}

.side-icon {
  width: 44px;
  height: 40px;
  flex-shrink: 0;
  display: flex;
  align-items: center;
  justify-content: center;
}

.side-sep {
  width: 28px;
  height: 1px;
  background: #5c5c5c;
  margin: 11px auto 13px;
}

.side-bottom {
  margin-top: auto;
  padding-bottom: 2px;
}

.side-bottom .side-sep {
  margin: 0 auto 4px;
}

/* windows taskbar */
.taskbar {
  height: 48px;
  background: #1a1d24;
  display: flex;
  align-items: center;
}

.weather {
  width: 323px;
  display: flex;
  align-items: center;
  padding-left: 21px;
  flex-shrink: 0;
}

.weather-icon {
  position: relative;
  width: 29px;
  height: 24px;
  padding-top: 2px;
}

.weather-badge {
  position: absolute;
  left: 9px;
  top: -4px;
  width: 16px;
  height: 16px;
  border-radius: 50%;
  background: #f9a3ae;
  color: #1a1d24;
  font-size: 11px;
  line-height: 16px;
  text-align: center;
}

.weather-text {
  display: flex;
  flex-direction: column;
  font-size: 11.5px;
  line-height: 16px;
  color: #c9ccd2;
}

.temp {
  color: #f4f4f4;
}

.task-center {
  display: flex;
  align-items: center;
}

.task-app {
  position: relative;
  width: 44px;
  height: 40px;
  border-radius: 5px;
  display: flex;
  align-items: center;
  justify-content: center;
}

.win-logo {
  width: 24px;
  margin-right: 13px;
}

.first-app {
  margin-left: 2px;
}

.active {
  width: 40px;
  margin: 0 2px;
  background: #2b2e36;
  outline: 1px solid #33363e;
}

.active::after,
.has-dot::after {
  content: "";
  position: absolute;
  left: 50%;
  bottom: 1px;
  height: 3px;
  border-radius: 2px;
}

.has-dot::after {
  width: 6px;
  margin-left: -3px;
  background: #8f9298;
}

.active::after {
  width: 16px;
  margin-left: -8px;
  background: #4cc2ff;
}

.searchbox {
  width: 220px;
  height: 32px;
  border-radius: 16px;
  background: #3a3d44;
  display: flex;
  align-items: center;
  padding-left: 11px;
  gap: 10px;
  font-size: 13.5px;
  color: #d0d2d6;
}

.shark {
  margin-left: auto;
  margin-right: 6px;
}

.tray {
  margin-left: auto;
  display: flex;
  align-items: center;
  height: 100%;
  color: #f4f4f4;
  font-size: 12px;
}

.tray-chevron {
  margin-right: 16px;
}

.tray-cloud {
  margin-right: 15px;
}

.lang {
  width: 30px;
  display: flex;
  flex-direction: column;
  align-items: center;
  line-height: 16px;
  margin-right: 15px;
}

.tray-wifi {
  margin-right: 7px;
}

.tray-vol {
  margin-right: 8px;
}

.tray-batt {
  margin-right: 8px;
}

.clock {
  width: 71px;
  display: flex;
  flex-direction: column;
  align-items: flex-end;
  line-height: 17px;
  margin-right: 7px;
}

.tray-bell {
  margin-right: 16px;
}

.tray-copilot {
  position: relative;
  width: 26px;
  height: 26px;
  margin-right: 20px;
}

.pre {
  position: absolute;
  left: 6px;
  top: 15px;
  width: 18px;
  height: 9px;
  border-radius: 2px;
  background: #f2c21a;
  color: #1a1d24;
  font-size: 7px;
  font-weight: 700;
  line-height: 9px;
  text-align: center;
}
```
